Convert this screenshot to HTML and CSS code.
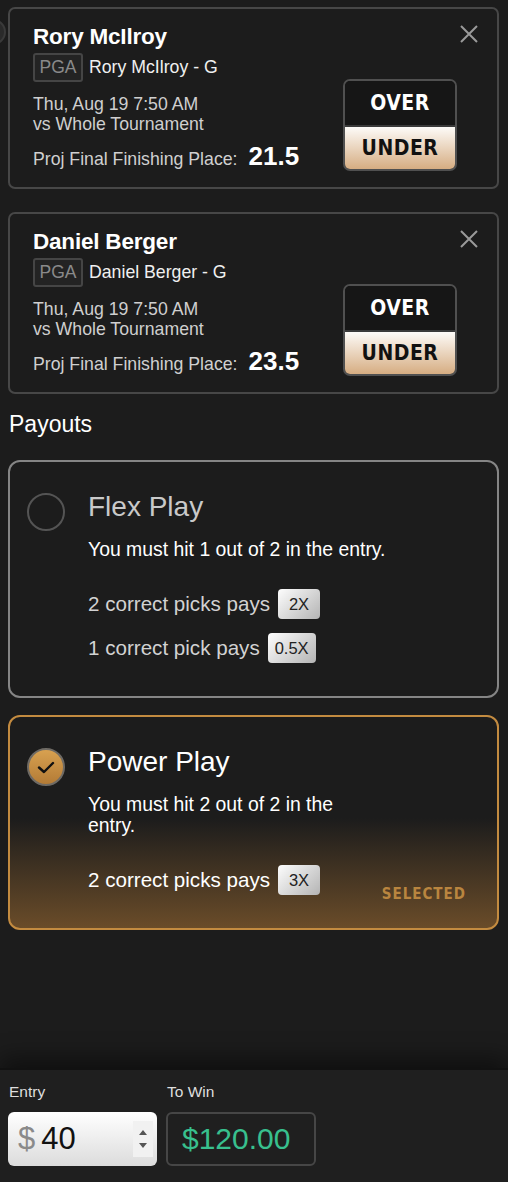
FILE: index.html
```html
<!DOCTYPE html>
<html lang="en">
<head>
    <meta charset="UTF-8">
    <meta name="viewport" content="width=device-width, initial-scale=1.0">
    <title>Entry - Picks</title>
    <link rel="stylesheet" href="styles.css">
</head>
<body>
    <div class="screen">
        <main class="content">
            <div class="pick-list">
                <div class="pick-card">
                    <span class="pick-handle"></span>
                    <div class="pick-info">
                        <div class="pick-name">Rory McIlroy</div>
                        <div class="pick-league">
                            <span class="league-tag">PGA</span>
                            <span class="league-player">Rory McIlroy - G</span>
                        </div>
                        <div class="pick-meta">Thu, Aug 19 7:50 AM<br>vs Whole Tournament</div>
                        <div class="pick-line">
                            <span class="line-label">Proj Final Finishing Place:</span>
                            <span class="line-value">21.5</span>
                        </div>
                    </div>
                    <div class="pick-toggle">
                        <button class="toggle-btn">OVER</button>
                        <button class="toggle-btn active">UNDER</button>
                    </div>
                    <button class="pick-close">
                        <svg width="18" height="18" viewBox="0 0 18 18"><path d="M1 1 L17 17 M17 1 L1 17" stroke="#9a9a9a" stroke-width="2" fill="none"/></svg>
                    </button>
                </div>

                <div class="pick-card">
                    <div class="pick-info">
                        <div class="pick-name">Daniel Berger</div>
                        <div class="pick-league">
                            <span class="league-tag">PGA</span>
                            <span class="league-player">Daniel Berger - G</span>
                        </div>
                        <div class="pick-meta">Thu, Aug 19 7:50 AM<br>vs Whole Tournament</div>
                        <div class="pick-line">
                            <span class="line-label">Proj Final Finishing Place:</span>
                            <span class="line-value">23.5</span>
                        </div>
                    </div>
                    <div class="pick-toggle">
                        <button class="toggle-btn">OVER</button>
                        <button class="toggle-btn active">UNDER</button>
                    </div>
                    <button class="pick-close">
                        <svg width="18" height="18" viewBox="0 0 18 18"><path d="M1 1 L17 17 M17 1 L1 17" stroke="#9a9a9a" stroke-width="2" fill="none"/></svg>
                    </button>
                </div>
            </div>

            <h2 class="section-title">Payouts</h2>

            <div class="payout-list">
                <div class="payout-card">
                    <span class="radio"></span>
                    <div class="payout-body">
                        <div class="payout-title">Flex Play</div>
                        <div class="payout-desc">You must hit 1 out of 2 in the entry.</div>
                        <div class="payout-row">2 correct picks pays <span class="multiplier">2X</span></div>
                        <div class="payout-row">1 correct pick pays <span class="multiplier">0.5X</span></div>
                    </div>
                </div>

                <div class="payout-card selected">
                    <span class="radio checked">
                        <svg width="24" height="24" viewBox="0 0 24 24"><path d="M5 12.5 L10 17 L19 8" stroke="#111" stroke-width="2.4" fill="none" stroke-linecap="round" stroke-linejoin="round"/></svg>
                    </span>
                    <div class="payout-body">
                        <div class="payout-title">Power Play</div>
                        <div class="payout-desc">You must hit 2 out of 2 in the entry.</div>
                        <div class="payout-row">2 correct picks pays <span class="multiplier">3X</span></div>
                    </div>
                    <span class="selected-label">SELECTED</span>
                </div>
            </div>
        </main>

        <footer class="entry-bar">
            <div class="entry-field">
                <label>Entry</label>
                <div class="entry-input">
                    <span class="currency">$</span>
                    <span class="amount">40</span>
                    <span class="spinner">
                        <svg width="10" height="26" viewBox="0 0 10 26"><path d="M5 4 L9 9 L1 9 Z M1 17 L9 17 L5 22 Z" fill="#555"/></svg>
                    </span>
                </div>
            </div>
            <div class="entry-field">
                <label>To Win</label>
                <div class="win-box">$120.00</div>
            </div>
        </footer>
    </div>
</body>
</html>
```

FILE: styles.css
```css
body {
    margin: 0;
    background-color: #1c1c1c;
    color: white;
    font-family: "Liberation Sans", Arial, sans-serif;
}

.screen {
    min-height: 100vh;
    display: flex;
    flex-direction: column;
}

.content {
    flex: 1;
    padding: 7px 9px 0 8px;
}

/* pick cards */
.pick-list {
    display: flex;
    flex-direction: column;
    gap: 23px;
}

.pick-card {
    position: relative;
    display: flex;
    padding: 14px 19px 16px 23px;
    border: 2px solid #474747;
    border-radius: 7px;
}

.pick-handle {
    position: absolute;
    left: -30px;
    top: 10px;
    width: 22px;
    height: 22px;
    border-radius: 50%;
    border: 2px solid #3a3a3a;
    background-color: #2a2a2a;
}

.pick-info {
    flex: 1;
}

.pick-name {
    font-size: 22.5px;
    font-weight: bold;
    line-height: 28px;
    letter-spacing: -0.2px;
}

.pick-league {
    display: flex;
    align-items: center;
    margin-top: 2px;
    height: 29px;
}

.league-tag {
    display: flex;
    align-items: center;
    justify-content: center;
    box-sizing: border-box;
    width: 50px;
    height: 29px;
    border: 2px solid #454545;
    border-radius: 3px;
    background-color: #232323;
    color: #8a8a8a;
    font-size: 17.5px;
}

.league-player {
    margin-left: 6px;
    font-size: 17.7px;
    color: #f0f0f0;
}

.pick-meta {
    margin-top: 12px;
    font-size: 17.7px;
    line-height: 20px;
    color: #cfcfcf;
}

.pick-line {
    display: flex;
    align-items: baseline;
    height: 30px;
    margin-top: 7px;
}

.line-label {
    font-size: 17.7px;
    color: #d0d0d0;
}

.line-value {
    margin-left: 11px;
    font-size: 26px;
    font-weight: bold;
}

.pick-toggle {
    align-self: flex-end;
    display: flex;
    flex-direction: column;
    width: 114px;
    box-sizing: border-box;
    border: 2px solid #505050;
    border-radius: 7px;
    overflow: hidden;
}

.toggle-btn {
    height: 44px;
    border: none;
    padding: 0;
    background-color: #161616;
    color: white;
    font-family: "DejaVu Sans Condensed", "Liberation Sans Narrow", "DejaVu Sans", sans-serif;
    font-stretch: condensed;
    font-weight: bold;
    font-size: 21px;
    letter-spacing: 0.5px;
}

.toggle-btn.active {
    border-top: 2px solid #3a3a3a;
    background: linear-gradient(to bottom, #fdfbf8, #d6ad82);
    color: #111;
}

.pick-close {
    align-self: flex-start;
    margin: 2px 0 0 3px;
    padding: 0;
    width: 18px;
    height: 18px;
    border: none;
    background: none;
}

/* payouts */
.section-title {
    margin: 16px 0 22px 1px;
    font-size: 23px;
    font-weight: normal;
    line-height: 28px;
}

.payout-list {
    display: flex;
    flex-direction: column;
    gap: 17px;
}

.payout-card {
    display: flex;
    align-items: flex-start;
    padding: 29px 31px 33px 17px;
    border: 2px solid #858585;
    border-radius: 12px;
}

.payout-card.selected {
    border-color: #c38b40;
    background: linear-gradient(to bottom, #1c1c1c 0%, #1c1c1c 48%, #6a4c29 100%);
}

.radio {
    flex: none;
    display: flex;
    align-items: center;
    justify-content: center;
    box-sizing: border-box;
    width: 38px;
    height: 38px;
    margin-top: 2px;
    border: 2px solid #545454;
    border-radius: 50%;
}

.radio.checked {
    border-color: #6e6a64;
    background: linear-gradient(to bottom, #d8a150, #b37b36);
}

.payout-body {
    flex: 1;
    margin-left: 23px;
}

.payout-title {
    font-size: 28px;
    line-height: 32px;
    color: #c9c9c9;
}

.selected .payout-title {
    color: white;
}

.payout-desc {
    margin-top: 16px;
    font-size: 19.4px;
    line-height: 21px;
}

.payout-row {
    display: flex;
    align-items: center;
    height: 30px;
    margin-top: 29px;
    font-size: 20.6px;
    color: #d2d2d2;
}

.selected .payout-row {
    color: white;
}

.payout-row + .payout-row {
    margin-top: 14px;
}

.multiplier {
    display: inline-flex;
    align-items: center;
    justify-content: center;
    box-sizing: border-box;
    min-width: 42px;
    height: 30px;
    padding: 0 7px;
    margin-left: 8px;
    border-radius: 4px;
    background: linear-gradient(135deg, #fdfdfd, #b4b4b4);
    color: #222;
    font-size: 16.5px;
}

.selected-label {
    align-self: flex-end;
    margin: 0 0 -9px 16px;
    color: #b9853f;
    font-family: "DejaVu Sans Condensed", "Liberation Sans Narrow", "DejaVu Sans", sans-serif;
    font-stretch: condensed;
    font-weight: bold;
    font-size: 15px;
    letter-spacing: 1px;
    line-height: 20px;
}

/* entry bar */
.entry-bar {
    display: flex;
    gap: 9px;
    height: 114px;
    box-sizing: border-box;
    padding: 12px 8px 0 8px;
    background-color: #1f1f1f;
    border-top: 2px solid #111;
    box-shadow: 0 -10px 22px rgba(0, 0, 0, 0.45);
}

.entry-field label {
    display: block;
    padding-left: 1px;
    font-size: 15.5px;
    line-height: 20px;
    color: #dedede;
}

.entry-input {
    display: flex;
    align-items: center;
    box-sizing: border-box;
    width: 149px;
    height: 54px;
    margin-top: 10px;
    padding: 0 4px 0 10px;
    border-radius: 6px;
    background: linear-gradient(to bottom, #ffffff, #dcdcdc);
}

.currency {
    color: #8a8a8a;
    font-size: 31px;
}

.amount {
    flex: 1;
    margin-left: 6px;
    color: #111;
    font-size: 31px;
}

.spinner {
    display: flex;
    align-items: center;
    justify-content: center;
    width: 20px;
    height: 36px;
    background-color: #f1f1f1;
}

.win-box {
    display: flex;
    align-items: center;
    box-sizing: border-box;
    width: 150px;
    height: 54px;
    margin-top: 10px;
    padding-left: 14px;
    border: 2px solid #464646;
    border-radius: 6px;
    color: #38c08e;
    font-size: 30px;
}
```
